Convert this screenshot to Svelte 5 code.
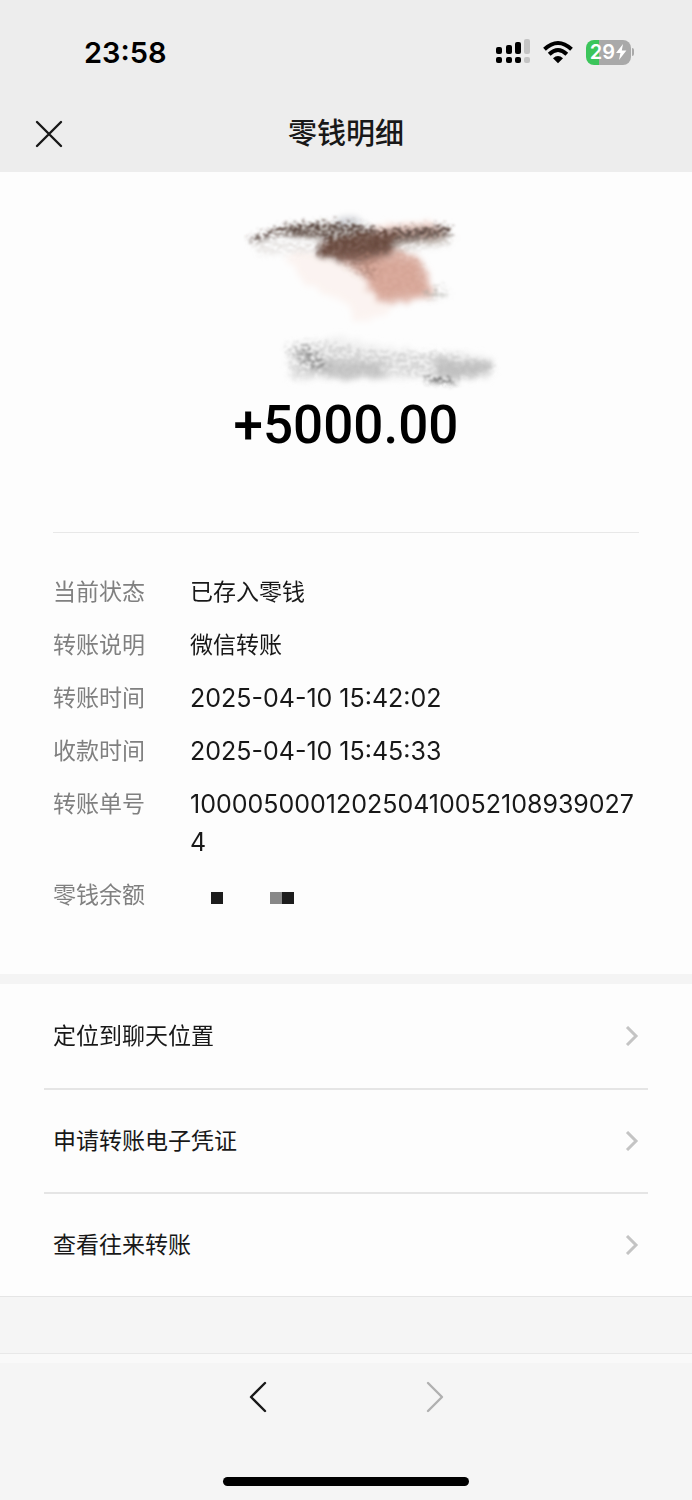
<script>
  const details = [
    { label: "当前状态", value: "已存入零钱" },
    { label: "转账说明", value: "微信转账" },
    { label: "转账时间", value: "2025-04-10 15:42:02", numeric: true },
    { label: "收款时间", value: "2025-04-10 15:45:33", numeric: true },
    { label: "转账单号", value: "1000050001202504100521089390274", numeric: true },
    { label: "零钱余额", hidden: true },
  ];

  const links = ["定位到聊天位置", "申请转账电子凭证", "查看往来转账"];
</script>

<div class="page">
  <header>
    <div class="status">
      <span class="time">23:58</span>
      <div class="indicators">
        <svg width="34" height="26" viewBox="0 0 34 26" aria-hidden="true">
          <g fill="#000">
            <rect x="0" y="8" width="6" height="7" rx="2" />
            <rect x="10" y="6" width="6" height="9" rx="2" />
            <rect x="19" y="3" width="6" height="12" rx="2" />
            <rect x="0" y="18" width="6" height="6" rx="2" />
            <rect x="10" y="18" width="6" height="6" rx="2" />
            <rect x="19" y="18" width="6" height="6" rx="2" />
          </g>
          <g fill="#c4c4c4">
            <rect x="28" y="0" width="6" height="15" rx="2" />
            <rect x="28" y="18" width="6" height="6" rx="2" />
          </g>
        </svg>
        <svg width="30" height="24" viewBox="0 0 30 24" aria-hidden="true">
          <g fill="none" stroke="#000" stroke-width="4">
            <path d="M1.5 9.2Q15 -3.2 28.5 9.2" />
            <path d="M6.2 14.2Q15 5.8 23.8 14.2" />
          </g>
          <path d="M10 18.2Q15 13.6 20 18.2L15 23.2Z" />
        </svg>
        <div class="battery">
          <div class="body">
            <span>29</span>
            <svg width="12" height="16" viewBox="0 0 12 16" aria-hidden="true">
              <path d="M8 0L1 9H5.4L4 16L11.4 6.6H6.8Z" fill="#fff" />
            </svg>
          </div>
          <div class="cap"></div>
        </div>
      </div>
    </div>
    <div class="titlebar">
      <button class="close" aria-label="关闭">
        <svg width="28" height="28" viewBox="0 0 28 28">
          <path d="M2 2L26 26M26 2L2 26" stroke="#181818" stroke-width="2.4" stroke-linecap="round" />
        </svg>
      </button>
      <h1>零钱明细</h1>
    </div>
  </header>

  <main>
    <section class="summary">
      <svg class="smudge" width="300" height="200" viewBox="0 0 300 200" aria-hidden="true">
        <defs>
          <filter id="brush" x="-10%" y="-20%" width="120%" height="140%">
            <feTurbulence type="fractalNoise" baseFrequency="0.22 0.32" numOctaves="3" seed="4" result="noise" />
            <feGaussianBlur in="SourceGraphic" stdDeviation="2" result="base" />
            <feDisplacementMap in="base" in2="noise" scale="18" xChannelSelector="R" yChannelSelector="G" result="rough" />
            <feColorMatrix in="noise" type="matrix" values="0 0 0 0 0  0 0 0 0 0  0 0 0 0 0  0 4 0 0 -1.4" result="grain" />
            <feComposite in="rough" in2="grain" operator="in" />
            <feGaussianBlur stdDeviation="0.8" />
          </filter>
          <filter id="soft" x="-20%" y="-20%" width="140%" height="140%">
            <feTurbulence type="fractalNoise" baseFrequency="0.12" numOctaves="2" seed="9" />
            <feDisplacementMap in="SourceGraphic" scale="14" xChannelSelector="R" yChannelSelector="G" />
            <feGaussianBlur stdDeviation="3" />
          </filter>
        </defs>

        <g filter="url(#soft)">
          <path d="M66 54L130 50L170 104L168 114L134 120L126 104L84 84Z" fill="#fbefeb" opacity="0.7" />
          <path d="M152 26L214 22L216 34L150 34Z" fill="#f7ddd5" />
          <path d="M108 50L160 46L192 54L208 70L214 98L156 104L142 76Z" fill="#e2bbb0" />
          <path d="M140 60L190 60L208 92L160 98Z" fill="#dba99a" opacity="0.8" />
          <path d="M98 44L142 32L188 33L170 54L144 64L98 56Z" fill="#7d5f54" />
          <path d="M116 19L132 16L146 24L120 28Z" fill="#d3d5da" />
          <path d="M60 28L112 25L150 32L100 38L64 36Z" fill="#aaa19a" opacity="0.8" />
          <path d="M172 29L226 28L226 39L176 43Z" fill="#9b7f74" opacity="0.8" />
          <path d="M72 146L120 138L200 152L264 154L270 178L72 180Z" fill="#eee" opacity="0.7" />
          <path d="M94 161L164 161L165 178L112 180Z" fill="#cbcbcb" />
          <path d="M212 158L268 162L272 174L220 180Z" fill="#c6c6c6" />
        </g>
        <g filter="url(#brush)">
          <path d="M28 39L62 27L98 23L132 25L166 31L228 26L230 37L180 45L150 52L98 52L102 38L58 37L34 45Z" fill="#5c4a42" />
          <path d="M96 44L138 34L180 34L166 52L140 60L98 56Z" fill="#67483d" />
          <path d="M108 54L160 54L156 82L136 74Z" fill="#8a665a" opacity="0.5" />
          <path d="M130 56L178 51L202 66L206 92L162 101L148 76Z" fill="#c9978a" opacity="0.35" />
          <path d="M202 93L226 88L228 97L208 101Z" fill="#a7a6a0" opacity="0.6" />
          <path d="M30 42L100 44L98 54L40 56Z" fill="#cfcac6" opacity="0.5" />
          <path d="M170 42L234 38L228 46L174 54Z" fill="#b3aaa4" opacity="0.6" />
          <path d="M66 146L94 142L170 154L230 154L272 164L274 174L234 182L164 176L70 180Z" fill="#b8b8b8" opacity="0.5" />
          <path d="M76 150L88 148L108 168L94 174L78 162Z" fill="#666" opacity="0.6" />
          <path d="M204 179L238 181L234 185L206 183Z" fill="#333" />
        </g>
      </svg>
      <p class="amount">+5000.00</p>
    </section>

    <dl class="details">
      {#each details as item}
        <div class="row">
          <dt>{item.label}</dt>
          {#if item.hidden}
            <dd class="mosaic" aria-label="已隐藏">
              <i class="dark"></i>
              <i class="mid"></i>
              <i class="dark"></i>
            </dd>
          {:else}
            <dd class:numeric={item.numeric}>{item.value}</dd>
          {/if}
        </div>
      {/each}
    </dl>

    <nav class="links">
      {#each links as link}
        <a href="#top">
          <span>{link}</span>
          <svg width="14" height="20" viewBox="0 0 14 20" aria-hidden="true">
            <path d="M2 1L11 10L2 19" fill="none" stroke="#c4c4c4" stroke-width="3" />
          </svg>
        </a>
      {/each}
    </nav>
  </main>

  <footer>
    <div class="history">
      <button aria-label="后退">
        <svg width="18" height="32" viewBox="0 0 18 32">
          <path d="M16 2L2 16L16 30" fill="none" stroke="#181818" stroke-width="2.4" stroke-linecap="round" stroke-linejoin="round" />
        </svg>
      </button>
      <button aria-label="前进" disabled>
        <svg width="18" height="32" viewBox="0 0 18 32">
          <path d="M2 2L16 16L2 30" fill="none" stroke="#b0b0b0" stroke-width="2.4" stroke-linecap="round" stroke-linejoin="round" />
        </svg>
      </button>
    </div>
    <div class="home"></div>
  </footer>
</div>

<style>
  :global(body) {
    margin: 0;
    background: #f5f5f5;
  }
  .page {
    display: flex;
    flex-direction: column;
    min-height: 100vh;
    font-family: Inter, "Noto Sans CJK SC", sans-serif;
    color: #181818;
  }
  button {
    display: flex;
    align-items: center;
    justify-content: center;
    padding: 0;
    border: 0;
    background: none;
  }
  header {
    background: #ededed;
  }
  .status {
    display: flex;
    align-items: center;
    justify-content: space-between;
    height: 64px;
    padding: 20px 58px 12px 84px;
  }
  .time {
    font-size: 29px;
    font-weight: 600;
    color: #000;
  }
  .indicators {
    display: flex;
    align-items: center;
    gap: 13px;
  }
  .battery {
    display: flex;
    align-items: center;
    gap: 1px;
  }
  .body {
    display: flex;
    align-items: center;
    justify-content: center;
    width: 45px;
    height: 25px;
    border-radius: 8px;
    background: linear-gradient(90deg, #3cc55b 30%, #a9a9a9 30%);
    color: #fff;
    font-size: 20px;
    font-weight: 600;
  }
  .cap {
    width: 2px;
    height: 8px;
    border-radius: 0 2px 2px 0;
    background: #a9a9a9;
  }
  .titlebar {
    display: grid;
    grid-template-columns: 1fr auto 1fr;
    align-items: center;
    height: 76px;
    padding: 0 35px;
  }
  .close {
    justify-self: start;
  }
  h1 {
    margin: 0;
    font-size: 29px;
    font-weight: 500;
    line-height: 44px;
  }
  main {
    background: #fdfdfd;
  }
  .summary {
    display: flex;
    flex-direction: column;
    align-items: center;
    margin: 0 53px;
    padding: 28px 0 75px;
    border-bottom: 1px solid #e8e8e8;
  }
  .smudge {
    max-width: 100%;
    margin-left: 48px;
  }
  .amount {
    margin: -7px 0 0;
    font-family: Roboto, sans-serif;
    font-size: 53px;
    font-weight: 500;
    line-height: 64px;
    color: #000;
  }
  .details {
    display: flex;
    flex-direction: column;
    gap: 15px;
    margin: 0;
    padding: 40px 53px 60px;
    font-size: 23px;
    line-height: 38px;
  }
  .row {
    display: flex;
    gap: 44px;
  }
  dt {
    flex: none;
    width: 93px;
    color: #808080;
  }
  dd {
    flex: 1;
    min-width: 0;
    margin: 0;
    overflow-wrap: anywhere;
  }
  .numeric {
    font-size: 25px;
  }
  .mosaic {
    display: flex;
    align-items: center;
    padding: 6px 0 0 21px;
    box-sizing: border-box;
  }
  .mosaic i {
    width: 12px;
    height: 12px;
    background: #888;
  }
  .mosaic .dark {
    background: #1c1c1c;
  }
  .mosaic .mid {
    margin-left: 47px;
  }
  .links {
    padding: 0 44px;
    border-top: 10px solid #f4f4f4;
    border-bottom: 1px solid #e5e5e5;
  }
  .links a {
    display: flex;
    align-items: center;
    justify-content: space-between;
    height: 102px;
    padding: 0 9px;
    border-bottom: 2px solid #e5e5e5;
    color: #181818;
    font-size: 23px;
    line-height: 32px;
    text-decoration: none;
  }
  .links a:first-child {
    height: 104px;
  }
  .links a:last-child {
    border-bottom: 0;
  }
  footer {
    flex: 1;
    display: flex;
    flex-direction: column;
    align-items: center;
    margin-top: 56px;
    border-top: 1px solid #e8e8e8;
    background: linear-gradient(#f9f9f9 9px, #f5f5f5 9px);
  }
  .history {
    display: flex;
    gap: 133px;
    padding: 21px 0;
  }
  .history button {
    width: 44px;
    height: 44px;
  }
  .home {
    width: 246px;
    height: 9px;
    margin-top: auto;
    margin-bottom: 14px;
    border-radius: 5px;
    background: #000;
  }
</style>
